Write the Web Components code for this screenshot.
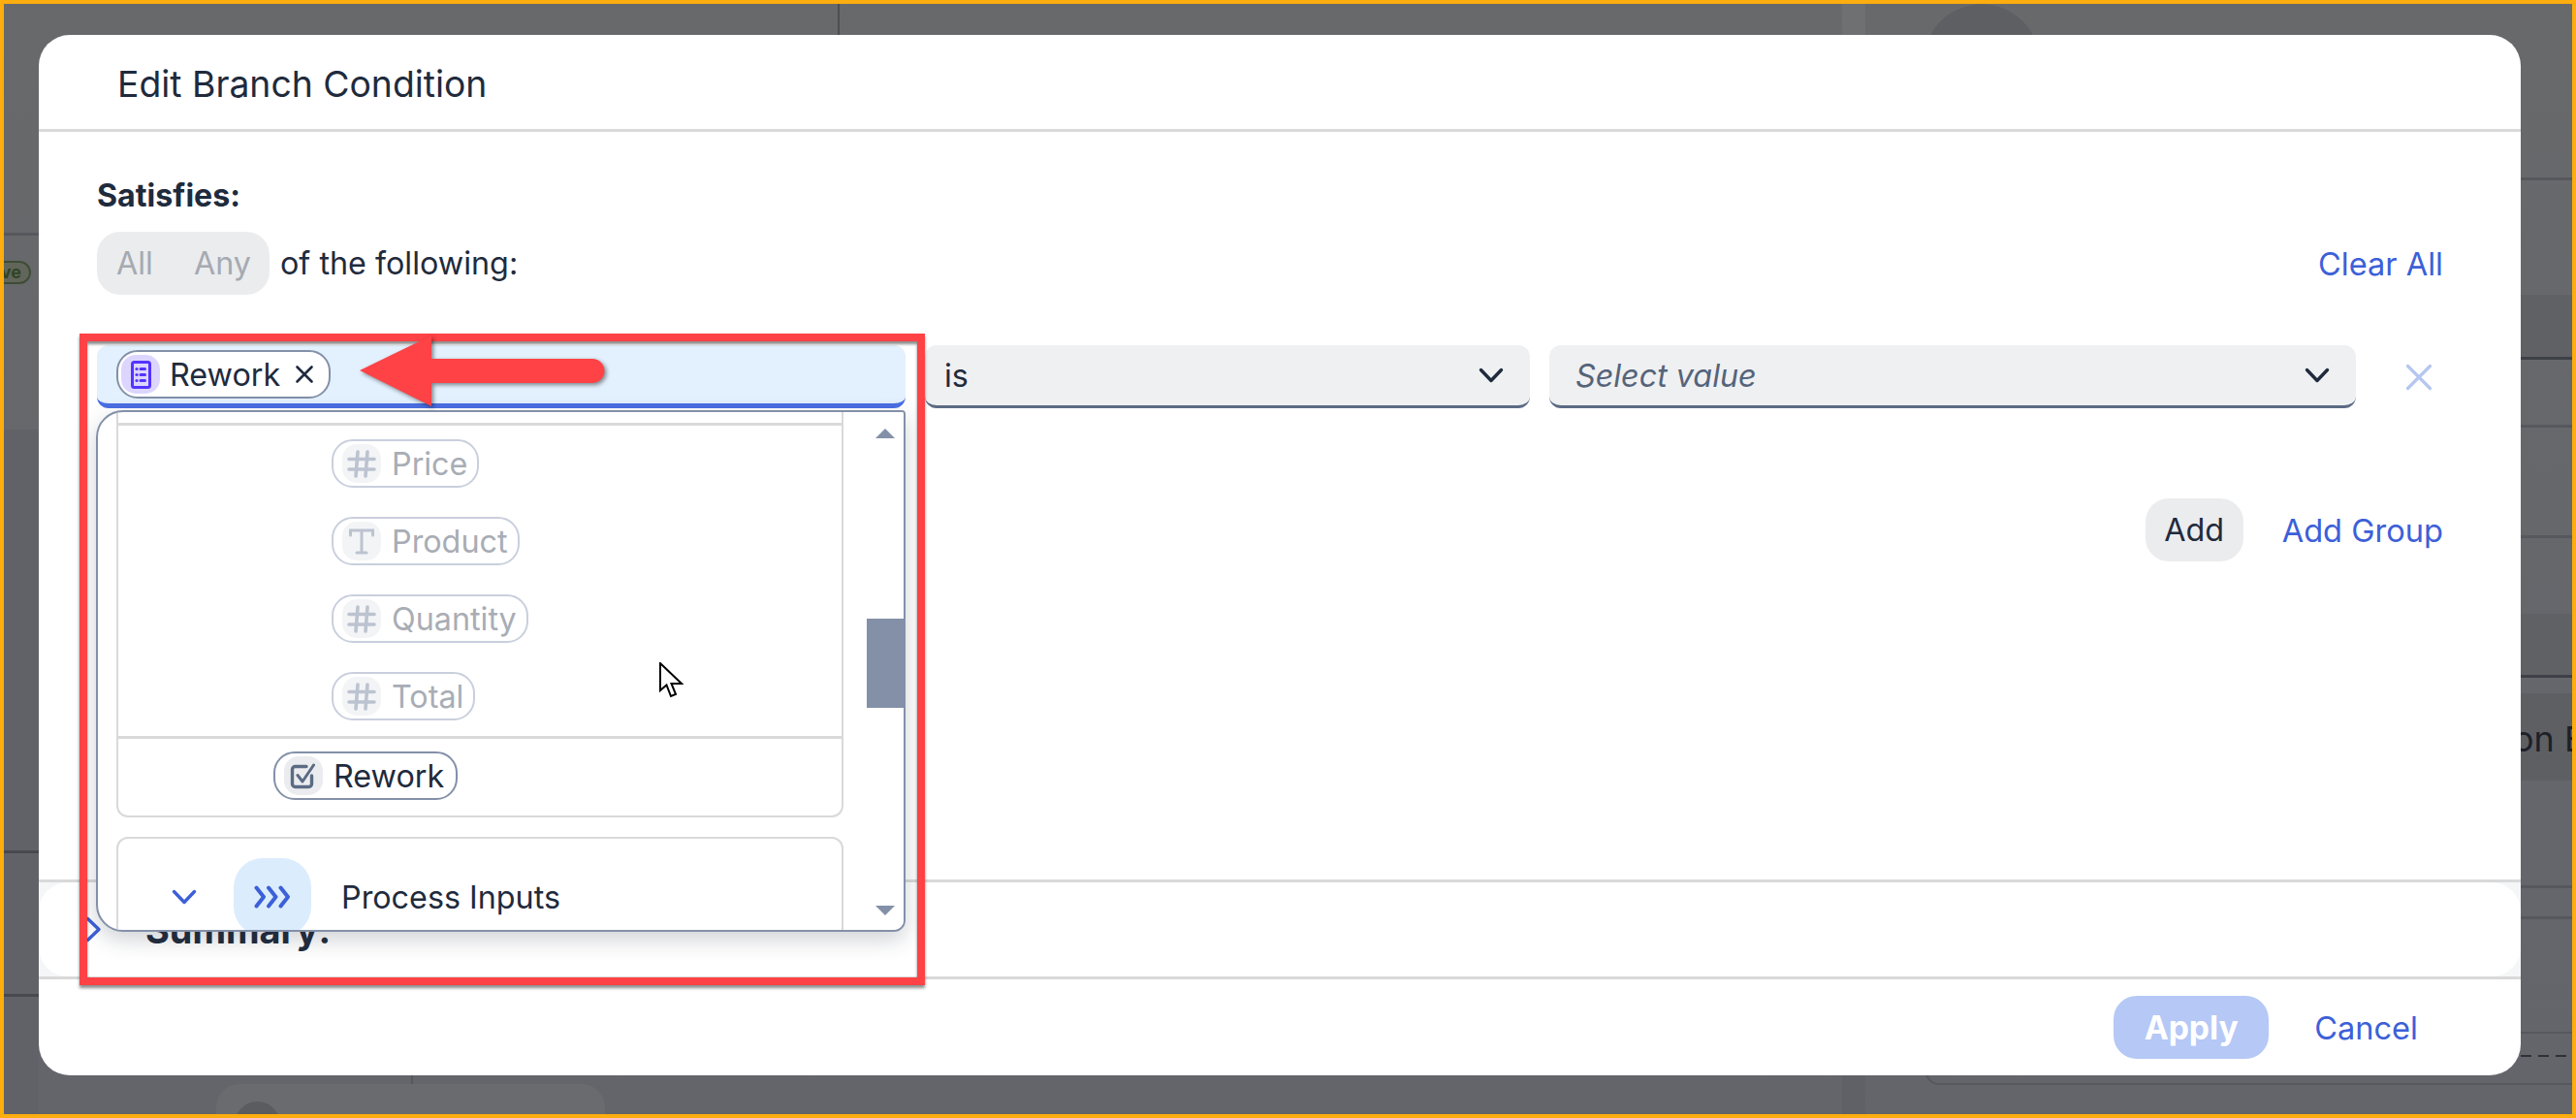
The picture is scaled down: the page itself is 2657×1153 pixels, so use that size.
<!DOCTYPE html>
<html lang="en"><head><meta charset="utf-8"><title>Edit Branch Condition</title>
<style>html,body{margin:0;padding:0;background:#66686b}</style></head>
<body>
<app-stage>
  <branch-dialog></branch-dialog>
</app-stage>
<script>
const ICONS={
calc:'<svg width="21" height="29" viewBox="0 0 21 29" fill="none" stroke="currentColor"><rect x="1.5" y="1.5" width="18" height="26" rx="2" stroke-width="3"/><path d="M10 8.500h4.500M10 14.500h4.500M10 20.500h4.500" stroke-width="3" stroke-linecap="round"/><circle cx="6" cy="8.500" r="1.600" fill="currentColor" stroke="none"/><circle cx="6" cy="14.500" r="1.600" fill="currentColor" stroke="none"/><circle cx="6" cy="20.500" r="1.600" fill="currentColor" stroke="none"/></svg>',
hash:'<svg width="30" height="29" viewBox="0 0 30 29" fill="none" stroke="currentColor" stroke-width="3.600" stroke-linecap="round"><path d="M11 2 9 27M21 2 19 27M2 9.500h26M2 20h26"/></svg>',
text:'<svg width="28" height="27" viewBox="0 0 28 27" fill="none" stroke="currentColor" stroke-width="3" stroke-linecap="round"><path d="M2.500 7V2h23v5M14 2v23M9 25h10"/></svg>',
check:'<svg width="28" height="27" viewBox="0 0 28 27" fill="none" stroke="currentColor" stroke-linecap="round" stroke-linejoin="round"><path d="M22.500 13v8.500a3 3 0 0 1-3 3h-14a3 3 0 0 1-3-3v-15a3 3 0 0 1 3-3H17" stroke-width="3.400"/><path d="M8 12.500l5 6.500 11.500-17" stroke-width="3"/></svg>',
close:'<svg width="20" height="20" viewBox="0 0 20 20" fill="none" stroke="currentColor" stroke-width="2.600" stroke-linecap="round"><path d="M2.500 2.500l15 15M17.500 2.500l-15 15"/></svg>',
bigclose:'<svg width="28" height="28" viewBox="0 0 28 28" fill="none" stroke="currentColor" stroke-width="3.200" stroke-linecap="round"><path d="M2.500 2.500l23 23M25.500 2.500l-23 23"/></svg>',
chevron:'<svg width="26" height="16" viewBox="0 0 26 16" fill="none" stroke="currentColor" stroke-width="3.400" stroke-linecap="round" stroke-linejoin="round"><path d="M2.500 2.500 13 13.500 23.500 2.500"/></svg>',
triple:'<svg width="38" height="24" viewBox="0 0 38 24" fill="none" stroke="currentColor" stroke-width="4" stroke-linecap="round" stroke-linejoin="round"><path d="M2.500 2.500 10 12 2.500 21.500M15 2.500 22.500 12 15 21.500M27.500 2.500 35 12 27.500 21.500"/></svg>'
};
class UiIcon extends HTMLElement{connectedCallback(){const s=this.attachShadow({mode:'open'});s.innerHTML='<style>:host{display:inline-flex;align-items:center;justify-content:center;line-height:0}</style>'+(ICONS[this.getAttribute('name')]||'');}}
customElements.define('ui-icon',UiIcon);

class FieldChip extends HTMLElement{connectedCallback(){
const s=this.attachShadow({mode:'open'});
const off=this.hasAttribute('disabled'),sel=this.hasAttribute('closable'),ic=this.getAttribute('icon');
s.innerHTML=`<style>
:host{display:inline-flex;align-items:center;box-sizing:border-box;height:50px;border:2px solid ${off?'#c9cfdd':'#8390a8'};border-radius:22px;background:#fff;padding:0 ${sel?15:off?10:12}px 0 ${sel?3:9}px;gap:${sel?10:11}px;color:${off?'#a8adb5':'#1f2b3d'};font-size:32.3px;white-space:nowrap;flex:none}
.i{width:40px;height:40px;border-radius:15px;display:flex;align-items:center;justify-content:center;background:${off?'#f3f4f6':ic==='calc'?'#dcd6ff':'#ebecef'};color:${off?'#bcc3d0':ic==='calc'?'#5533ff':'#5b6b84'}}
.x{color:#1f2b3d;margin-left:5px;display:flex}
</style><span class="i"><ui-icon name="${ic}"></ui-icon></span><span>${this.getAttribute('label')}</span>${sel?'<span class="x"><ui-icon name="close"></ui-icon></span>':''}`;
}}
customElements.define('field-chip',FieldChip);

class SelectField extends HTMLElement{connectedCallback(){
const s=this.attachShadow({mode:'open'});
s.innerHTML=`<style>
:host{display:flex;align-items:center;justify-content:space-between;box-sizing:border-box;height:65px;background:#eff0f2;border-bottom:3px solid #5b6b84;border-radius:12px;padding:0 27px 0 20px;font-size:32.3px;color:#1f2b3d}
:host([placeholder]){font-style:italic;color:#556479;padding-left:27px}
ui-icon{color:#1f2b3d}
</style><span><slot></slot></span><ui-icon name="chevron"></ui-icon>`;
}}
customElements.define('select-field',SelectField);

class SegToggle extends HTMLElement{connectedCallback(){
const s=this.attachShadow({mode:'open'});
s.innerHTML=`<style>
:host{display:inline-flex;align-items:center;box-sizing:border-box;height:65px;width:178px;background:#ebecee;border-radius:24px;padding:0 19px 0 20px;justify-content:space-between;color:#a5aab1;font-size:32.3px}
</style><span>All</span><span>Any</span>`;
}}
customElements.define('seg-toggle',SegToggle);

class FieldDropdown extends HTMLElement{connectedCallback(){
const s=this.attachShadow({mode:'open'});
s.innerHTML=`<style>
:host{position:absolute;left:-1px;top:67px;width:835px;height:538px;box-sizing:border-box;display:block;z-index:3;background:#fff;border:2.500px solid #8390a8;border-radius:28px 4px 12px 28px;box-shadow:0 8px 22px rgba(40,50,70,.22);overflow:hidden;font-size:32.3px;color:#1f2b3d}
.wrap{display:flex;height:100%}
.list{width:750px;margin-left:19px;flex:none;display:flex;flex-direction:column;gap:20px}
.card1{box-sizing:border-box;height:418px;flex:none;border:2px solid #d9d9d9;border-top:0;border-radius:0 0 12px 12px;padding-top:10.500px;display:flex;flex-direction:column}
.sub{border-top:3px solid #d9d9d9;border-bottom:3px solid #d9d9d9;padding:14.500px 0 16px 220px;display:flex;flex-direction:column;align-items:flex-start;gap:30px}
.sel{padding:13px 0 0 160px}
.card2{box-sizing:border-box;flex:none;height:140px;border:2px solid #d9d9d9;border-radius:12px;padding:20px 0 0 55px;display:flex;gap:0}
.tw{width:25px;height:80px;display:flex;align-items:center;color:#3c60d8;margin-right:39px}
.badge{width:80px;height:80px;border-radius:30px;background:#dbecfd;color:#3c60d8;display:flex;align-items:center;justify-content:center}
.lab{height:80px;display:flex;align-items:center;margin-left:31px}
.bar{flex:1;box-sizing:border-box;padding-left:23px;position:relative;display:flex;flex-direction:column;align-items:center;background:#fff}
.up,.dn{width:0;height:0;border-left:10px solid transparent;border-right:10px solid transparent}
.up{border-bottom:10px solid #8390a8;margin-top:17px}
.dn{border-top:10px solid #8390a8;margin-top:auto;margin-bottom:15px}
.thumb{width:38px;height:92px;background:#8390a8;margin-top:185.500px}
</style>
<div class="wrap"><div class="list">
<div class="card1"><div class="sub">
<field-chip disabled icon="hash" label="Price"></field-chip>
<field-chip disabled icon="text" label="Product"></field-chip>
<field-chip disabled icon="hash" label="Quantity"></field-chip>
<field-chip disabled icon="hash" label="Total"></field-chip>
</div><div class="sel"><field-chip icon="check" label="Rework"></field-chip></div></div>
<div class="card2"><span class="tw"><ui-icon name="chevron"></ui-icon></span><span class="badge"><ui-icon name="triple"></ui-icon></span><span class="lab">Process Inputs</span></div>
</div>
<div class="bar"><span class="up"></span><span class="thumb"></span><span class="dn"></span></div></div>`;
}}
customElements.define('field-dropdown',FieldDropdown);

class SummaryPanel extends HTMLElement{connectedCallback(){
const s=this.attachShadow({mode:'open'});
s.innerHTML=`<style>
:host{display:block;flex:none;box-sizing:border-box;height:103px;border-top:3px solid #d9d9d9;border-bottom:3px solid #d9d9d9;background:#f5f6f7}
.in{height:100%;background:#fff;border-radius:30px;display:flex;align-items:center;padding-left:48px;gap:45px;font-size:37.9px;font-weight:700;color:#1f2b3d}
svg{flex:none}
</style><div class="in"><svg width="17" height="27" viewBox="0 0 17 27" fill="none" stroke="#3c60d8" stroke-width="3.400" stroke-linecap="round" stroke-linejoin="round"><path d="M2.500 2.500 14 13.500 2.500 24.500"/></svg><span>Summary:</span></div>`;
}}
customElements.define('summary-panel',SummaryPanel);

class BranchDialog extends HTMLElement{connectedCallback(){
const s=this.attachShadow({mode:'open'});
s.innerHTML=`<style>
:host{display:flex;flex-direction:column;width:2560px;height:1073px;background:#fff;border-radius:32px;position:relative;z-index:1;overflow:hidden;color:#1f2b3d;font-size:32.3px}
header{flex:none;box-sizing:border-box;height:100px;border-bottom:3px solid #d9d9d9;display:flex;align-items:center;padding:3px 0 0 81px;font-size:37.3px}
main{flex:1;box-sizing:border-box;padding:48px 80px 0 60px;display:flex;flex-direction:column}
.lab{font-weight:700;line-height:36px;height:36px;font-size:32.2px}
.sat{display:flex;align-items:center;margin-top:19px;gap:11px}
.link{color:#3c60d8;font-size:32.6px}
.sat .link{margin-left:auto}
.cond{display:grid;grid-template-columns:834px 624px 832px 90px;gap:20px;margin-top:52px;align-items:center}
.token{position:relative;box-sizing:border-box;height:65px;background:#e3f0fd;border-bottom:5px solid #4a6fe3;border-radius:12px;display:flex;align-items:center;padding:0 0 0 20px}
.rm{color:#b5c6f0;justify-self:center}
.adds{display:flex;justify-content:flex-end;align-items:center;gap:40px;margin-top:93px}
.add{box-sizing:border-box;height:65px;width:101px;border-radius:24px;background:#ebecee;display:flex;align-items:center;justify-content:center}
footer{flex:none;height:99px;box-sizing:border-box;display:flex;align-items:center;justify-content:flex-end;gap:47px;padding:0 106px 0 0}
.apply{box-sizing:border-box;height:65px;width:160px;border-radius:24px;background:#b5c8f6;color:#fff;font-weight:700;font-size:33.6px;display:flex;align-items:center;justify-content:center}
</style>
<header>Edit Branch Condition</header>
<main>
<div class="lab">Satisfies:</div>
<div class="sat"><seg-toggle></seg-toggle><span>of the following:</span><span class="link">Clear All</span></div>
<div class="cond">
<div class="token"><field-chip closable icon="calc" label="Rework"></field-chip><field-dropdown></field-dropdown></div>
<select-field>is</select-field>
<select-field placeholder>Select value</select-field>
<ui-icon class="rm" name="bigclose"></ui-icon>
</div>
<div class="adds"><span class="add">Add</span><span class="link">Add Group</span></div>
</main>
<summary-panel></summary-panel>
<footer><span class="apply">Apply</span><span class="link">Cancel</span></footer>`;
}}
customElements.define('branch-dialog',BranchDialog);

class AppStage extends HTMLElement{connectedCallback(){
const s=this.attachShadow({mode:'open'});
const L='#56585e';
const ln=(x,y,w,h,c=L)=>`linear-gradient(${c},${c}) ${x}px ${y}px/${w}px ${h}px no-repeat`;
const bg=[
ln(860,0,2,36,'#4c4e54'),
ln(0,236,36,3),ln(0,873,36,3,'#47494f'),ln(0,1021,36,3,'#47494f'),
ln(420,1105,2,10),
ln(2596,179,53,3),ln(2596,364,53,3,'#3e4048'),ln(2596,434,53,3),ln(2596,548,53,3),ln(2596,692,53,3,'#3e4048'),ln(2596,909,53,3),ln(2596,941,53,3),
'repeating-linear-gradient(90deg,#2f3138 0 11px,transparent 11px 18px) 2596px 1084px/53px 2px no-repeat',
ln(2596,300,53,64,'#5f6165'),ln(2596,629,53,63,'#5f6165'),ln(2596,711,53,90,'#5d5f63'),
ln(0,439,36,706,'#606267'),
ln(1896,1105,24,40,'#5f6167'),ln(1896,0,24,36,'#6e7072'),
'radial-gradient(circle 60px at 2040px 60px,#5e5f62 99%,transparent 100%)',
'linear-gradient(#68696b,#63656b)'
].join(',');
s.innerHTML=`<style>
:host{display:block;box-sizing:border-box;width:2657px;height:1153px;border:4px solid #fdad0d;font-family:Inter,"Noto Sans",sans-serif;position:relative;overflow:hidden;background:${bg};padding:32px 0 0 36px}
.badge{position:absolute;left:-20px;top:265px;height:24px;width:48px;box-sizing:border-box;border:2px solid #3e4c36;border-radius:13px;background:#62665a;color:#2f4427;font:700 18px/20px Inter,sans-serif;text-align:right;padding-right:8px}
.bt{position:absolute;left:219px;top:1114px;width:401px;height:60px;border-radius:24px 24px 0 0;background:#6a6b6e}
.bc{position:absolute;left:238px;top:1132px;width:47px;height:47px;border-radius:50%;background:#5a5c60}
.br{position:absolute;left:1982px;top:1060px;width:700px;height:55px;border-radius:14px;border:2px solid #56585e;box-sizing:border-box}
.on{position:absolute;left:2588px;top:735px;font-size:36px;color:#1d2027;white-space:nowrap;line-height:46px}
.red{position:absolute;left:78px;top:340px;width:872px;height:672px;box-sizing:border-box;border:8px solid #ff4245;z-index:5;box-shadow:0 3px 3px rgba(0,0,0,.45),inset 0 3px 3px rgba(0,0,0,.45)}
.arrow{position:absolute;left:362px;top:340px;z-index:6;filter:drop-shadow(2px 2px 2px rgba(0,0,0,.45))}
.cur{position:absolute;left:675px;top:679px;z-index:6}
</style>
<span class="badge">ve</span><span class="bt"></span><span class="bc"></span><span class="br"></span><span class="on">on E</span>
<slot></slot>
<div class="red"></div>
<svg class="arrow" width="262" height="80" viewBox="0 0 262 80"><path d="M5 38 79 2V26H245a12.500 12.500 0 0 1 0 25H79V75Z" fill="#ff4245"/></svg>
<svg class="cur" width="26" height="37" viewBox="0 0 26 37"><path d="M2 1V29L8.500 23.500 13 35 18 33 13.500 22H24Z" fill="#fff" stroke="#000" stroke-width="2" stroke-linejoin="miter"/></svg>`;
}}
customElements.define('app-stage',AppStage);
</script>
</body></html>
